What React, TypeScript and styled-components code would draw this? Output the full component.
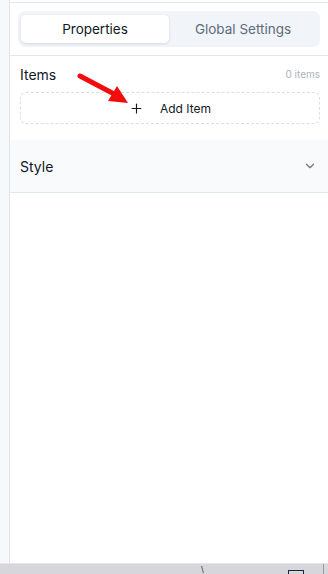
import React, { useState } from 'react'
import styled, { createGlobalStyle } from 'styled-components'
import { ChevronDown, Plus } from 'lucide-react'

const GlobalStyle = createGlobalStyle`
  html, body {
    margin: 0;
    padding: 0;
    background: #ffffff;
  }
  body {
    font-family: Inter, "Noto Sans", "Liberation Sans", sans-serif;
    color: #111827;
  }
`

export default function App() {
  const [activeTab, setActiveTab] = useState('properties')
  const [items] = useState([])

  return (
    <>
      <GlobalStyle />
      <Screen>
        <Main>
          <Gutter />
          <Panel>
            <TabsBar>
              <TabsTrack>
                <Tab active={activeTab === 'properties'} onClick={() => setActiveTab('properties')}>
                  Properties
                </Tab>
                <Tab active={activeTab === 'global'} onClick={() => setActiveTab('global')}>
                  Global Settings
                </Tab>
              </TabsTrack>
            </TabsBar>

            <ItemsSection>
              <SectionHead>
                <SectionTitle>Items</SectionTitle>
                <Count>{items.length} items</Count>
              </SectionHead>
              <AddButton>
                <Plus size={15} strokeWidth={1.8} />
                <span>Add Item</span>
              </AddButton>
              {/* annotation arrow from the screenshot */}
              <Arrow width="60" height="36" viewBox="0 0 60 36">
                <line x1="4" y1="4" x2="40" y2="23" stroke="#f20d0d" strokeWidth="5" strokeLinecap="round" />
                <polygon points="52,31 32,29 41,14" fill="#f20d0d" />
              </Arrow>
            </ItemsSection>

            <StyleRow>
              <SectionTitle>Style</SectionTitle>
              <ChevronDown size={14} color="#6b7280" strokeWidth={2} />
            </StyleRow>
          </Panel>
        </Main>
        <Taskbar>
          <TaskGlyph>\</TaskGlyph>
          <TaskBox />
          <TaskEdge />
        </Taskbar>
      </Screen>
    </>
  )
}

const Screen = styled.div`
  width: 328px;
  height: 574px;
  display: flex;
  flex-direction: column;
  overflow: hidden;
`
const Main = styled.div`
  flex: 1;
  display: flex;
  min-height: 0;
`
const Gutter = styled.div`
  width: 9px;
  background: #f6f9fb;
  border-right: 1px solid #dfe5eb;
`
const Panel = styled.section`
  flex: 1;
  display: flex;
  flex-direction: column;
  padding-top: 2px;
`
const TabsBar = styled.div`
  border-top: 1px solid #e3e8ee;
  border-bottom: 1px solid #e3e8ee;
  padding: 8px 8px 8px 8px;
`
const TabsTrack = styled.div`
  display: flex;
  background: #f1f4f8;
  border-radius: 7px;
  padding: 4px 3px;
  height: 28px;
`
const Tab = styled.button`
  flex: 1;
  border: none;
  border-radius: 5px;
  font-family: inherit;
  font-size: 13.5px;
  cursor: pointer;
  background: ${p => (p.active ? '#ffffff' : 'transparent')};
  color: ${p => (p.active ? '#111827' : '#5f6b7b')};
  box-shadow: ${p => (p.active ? '0 1px 3px rgba(15, 23, 42, 0.12)' : 'none')};
`
const ItemsSection = styled.div`
  position: relative;
  padding: 9px 8px 16px 10px;
`
const SectionHead = styled.div`
  display: flex;
  align-items: center;
  justify-content: space-between;
  height: 18px;
  margin-bottom: 9px;
`
const SectionTitle = styled.span`
  font-size: 14px;
  color: #111827;
`
const Count = styled.span`
  font-size: 10px;
  color: #aab4c0;
`
const AddButton = styled.button`
  width: 100%;
  height: 32px;
  display: flex;
  align-items: center;
  justify-content: center;
  gap: 16px;
  padding: 0;
  border: 1px dashed #d9dfe7;
  border-radius: 6px;
  background: #ffffff;
  font-family: inherit;
  font-size: 12px;
  color: #111827;
  cursor: pointer;
`
const Arrow = styled.svg`
  position: absolute;
  left: 66px;
  top: 16px;
  pointer-events: none;
`
const StyleRow = styled.div`
  height: 52px;
  display: flex;
  align-items: center;
  justify-content: space-between;
  padding: 0 11px 0 10px;
  background: #f8fafc;
  border-bottom: 1px solid #e3e8ee;
`
const Taskbar = styled.div`
  position: relative;
  height: 10px;
  background: #d7d7db;
  border-top: 1px solid #e6e6ea;
`
const TaskGlyph = styled.span`
  position: absolute;
  left: 201px;
  top: 1px;
  font-size: 8px;
  line-height: 8px;
  color: #222;
`
const TaskBox = styled.div`
  position: absolute;
  left: 288px;
  top: 6px;
  width: 14px;
  height: 8px;
  border: 1px solid #1c2340;
`
const TaskEdge = styled.div`
  position: absolute;
  right: 4px;
  top: 0;
  width: 1px;
  height: 10px;
  background: #9a9aa0;
`
